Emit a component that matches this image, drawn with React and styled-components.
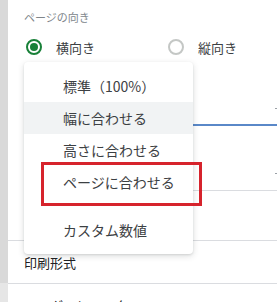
import React from 'react'
import styled, { createGlobalStyle } from 'styled-components';

const GlobalStyle = createGlobalStyle`
    body {
        margin: 0;
        background: #ffffff;
        font-family: "Noto Sans CJK JP", "Noto Sans", Roboto, sans-serif;
        overflow: hidden;
    }
`;

const Page = styled.div`
    display: flex;
    width: 277px;
    height: 302px;
    overflow: hidden;
    position: relative;
`;

const Strip = styled.div`
    width: 8px;
    flex: 0 0 8px;
    display: flex;
    flex-direction: column;
`;

const StripPart = styled.div`
    background: ${({light}) => light ? '#e6e6e6' : '#d9d9d9'};
    flex: ${({light}) => light ? '0 0 19px' : '1 1 auto'};
`;

const Panel = styled.div`
    flex: 1 1 auto;
    display: flex;
    flex-direction: column;
    min-width: 0;
`;

const Section = styled.div`
    padding: 9px 0 49px 16px;
    display: flex;
    flex-direction: column;
`;

const Label = styled.div`
    font-size: 11px;
    line-height: 16px;
    color: #80868b;
`;

const RadioRow = styled.div`
    display: flex;
    align-items: center;
    height: 24px;
    margin-top: 10px;
`;

const RadioOption = styled.label`
    display: flex;
    align-items: center;
    width: ${({w}) => w}px;
    font-size: 13px;
    color: #3c4043;
`;

const RadioCircle = styled.span`
    box-sizing: border-box;
    width: 16px;
    height: 16px;
    margin: 0 14px 0 2px;
    border-radius: 50%;
    border: 2px solid ${({checked}) => checked ? '#188038' : '#c4c7c5'};
    display: flex;
    align-items: center;
    justify-content: center;
    &::after {
        content: '';
        width: 8px;
        height: 8px;
        border-radius: 50%;
        background: ${({checked}) => checked ? '#188038' : 'transparent'};
    }
`;

const Field = styled.div`
    box-sizing: border-box;
    height: 34px;
    margin-top: ${({top}) => top}px;
    display: flex;
    align-items: center;
    justify-content: flex-end;
    border-bottom: ${({focused}) => focused ? '2px solid #5a88c8' : '1px solid #dadce0'};
`;

const Arrow = styled.span`
    width: 2px;
    height: 1px;
    background: #9aa0a6;
`;

const Row = styled.div`
    box-sizing: border-box;
    height: 43px;
    padding-left: 16px;
    border-top: 1px solid #dadce0;
    display: flex;
    align-items: center;
    font-size: 13px;
    color: #202124;
    flex: 0 0 auto;
`;

const Menu = styled.div`
    position: absolute;
    left: 24px;
    top: 62px;
    width: 169px;
    padding: 8px 0;
    background: #ffffff;
    border-radius: 4px;
    box-shadow: 0 2px 6px rgba(60, 64, 67, 0.18), 0 1px 2px rgba(60, 64, 67, 0.12);
`;

const MenuItem = styled.div`
    height: 32px;
    display: flex;
    align-items: center;
    padding-left: 39px;
    font-size: 14px;
    color: #3c4043;
    background: ${({active}) => active ? '#f1f3f4' : 'transparent'};
    white-space: nowrap;
`;

const Separator = styled.div`
    height: 16px;
`;

const Highlight = styled.div`
    position: absolute;
    left: 17px;
    top: 100px;
    width: 161px;
    height: 44px;
    box-sizing: border-box;
    border: 3px solid #d6232c;
    pointer-events: none;
`;

function App() {
    return (
        <React.Fragment>
            <GlobalStyle />
            <Page>
                <Strip>
                    <StripPart />
                    <StripPart light />
                </Strip>
                <Panel>
                    <Section>
                        <Label>ページの向き</Label>
                        <RadioRow>
                            <RadioOption w={142}><RadioCircle checked />横向き</RadioOption>
                            <RadioOption w={100}><RadioCircle />縦向き</RadioOption>
                        </RadioRow>
                        <Field top={33} focused><Arrow /></Field>
                        <Field top={31}><Arrow /></Field>
                    </Section>
                    <Row>印刷形式</Row>
                    <Row>ヘッダーとフッター</Row>
                </Panel>
                <Menu>
                    <MenuItem>標準（100%）</MenuItem>
                    <MenuItem active>幅に合わせる</MenuItem>
                    <MenuItem>高さに合わせる</MenuItem>
                    <MenuItem>ページに合わせる</MenuItem>
                    <Separator />
                    <MenuItem>カスタム数値</MenuItem>
                    <Highlight />
                </Menu>
            </Page>
        </React.Fragment>
    )
}

export default App
